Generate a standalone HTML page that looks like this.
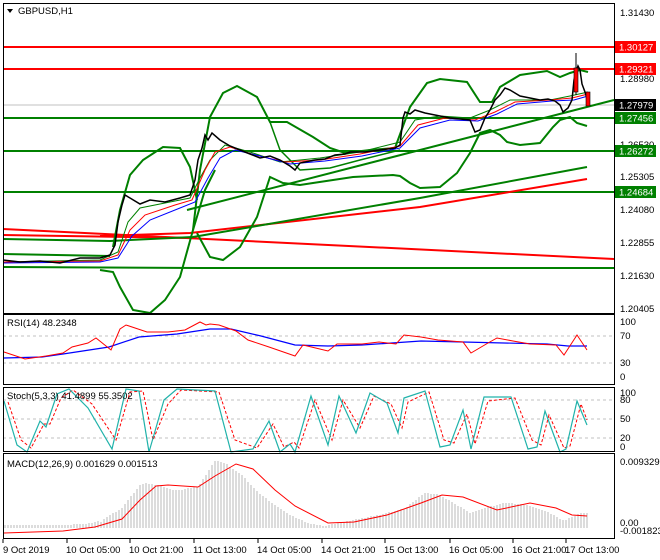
<!DOCTYPE html><html><head><meta charset="utf-8"><style>
body{margin:0;background:#fff;width:660px;height:560px;overflow:hidden}
svg{display:block}
text{font-family:"Liberation Sans",sans-serif;font-size:9.5px;fill:#000}
</style></head><body>
<svg id="s" width="660" height="560" viewBox="0 0 660 560" xmlns="http://www.w3.org/2000/svg">
<rect width="660" height="560" fill="#fff"/>
<g fill="none">
<line x1="3" y1="105" x2="614" y2="105" stroke="#c0c0c0" stroke-width="1"/>
<line x1="3" y1="47" x2="614" y2="47" stroke="#ff0000" stroke-width="2"/>
<line x1="3" y1="69" x2="614" y2="69" stroke="#ff0000" stroke-width="2"/>
<line x1="3" y1="118" x2="614" y2="118" stroke="#008000" stroke-width="2"/>
<line x1="3" y1="151" x2="614" y2="151" stroke="#008000" stroke-width="2"/>
<line x1="3" y1="192" x2="614" y2="192" stroke="#008000" stroke-width="2"/>
<polyline points="3,267 200,268 614,268" stroke="#008000" stroke-width="2"/>
<polyline points="3,229 614,259" stroke="#ff0000" stroke-width="2"/>
<polyline points="3,235 190,238" stroke="#ff0000" stroke-width="2"/>
<polyline points="100,236 190,233 420,207 587,179" stroke="#ff0000" stroke-width="2"/>
<polyline points="3,239 110,241 193,237 420,198 587,167" stroke="#008000" stroke-width="2"/>
<polyline points="187,210 420,150 614,100" stroke="#008000" stroke-width="2"/>
<polyline points="3,254 110,256" stroke="#008000" stroke-width="2"/>
<polyline points="113,247 120,210 130,175 143,160 163,147 180,148 190,167 197,200" stroke="#008000" stroke-width="2"/>
<polyline points="100,270 113,272 120,287 133,310 150,313 165,300 180,277 193,230 205,190 215,170" stroke="#008000" stroke-width="2"/>
<polyline points="193,230 200,170 210,117 223,93 237,86 257,97 270,122 287,122 313,137 330,148 345,153 370,150 395,148 410,107 427,83 440,79 467,82 480,102 492,102 500,87 520,75 547,71 560,77 570,73 580,70 588,72" stroke="#008000" stroke-width="2"/>
<polyline points="197,233 210,257 223,260 240,247 257,217 270,177 283,183 300,185 313,183 333,180 353,177 393,175 400,176 410,183 420,188 440,187 457,173 470,153 480,133 490,130 500,135 507,142 520,145 540,143 553,127 560,120 570,117 577,123 587,126" stroke="#008000" stroke-width="2"/>
<polyline points="270,122 280,150 300,170 330,168 360,160 400,150" stroke="#008000" stroke-width="1.5"/>
<polyline points="3,262 100,260 118,252 128,222 140,208 170,202 190,198 200,178 210,160 225,145 250,152 280,162 320,158 360,152 400,142 415,120 440,116 470,118 490,110 510,100 550,100 570,96 588,92" stroke="#008000" stroke-width="1"/>
<polyline points="3,262 100,261 118,255 130,230 145,215 175,205 192,200 205,170 215,152 230,147 255,155 285,162 320,160 360,154 400,146 418,125 445,118 475,120 495,112 515,102 550,100 572,98 588,94" stroke="#ff0000" stroke-width="1"/>
<polyline points="3,263 100,262 118,258 132,236 150,220 180,208 195,202 208,178 220,158 235,150 260,156 290,164 325,161 362,156 400,148 420,128 450,120 478,121 497,114 517,104 552,101 574,100 588,96" stroke="#0000ff" stroke-width="1"/>
<polyline points="3,260 20,262 40,261 60,263 80,258 100,258 110,255 115,245 118,222 122,205 125,195 130,198 140,204 150,200 165,202 180,198 190,195 195,180 198,160 202,148 205,135 208,140 212,133 220,140 230,146 240,150 250,154 260,158 270,156 280,160 290,166 295,170 300,163 305,162 315,160 325,159 335,155 345,154 350,152 365,152 380,150 395,148 400,145 403,118 405,112 410,114 415,110 425,113 430,114 440,116 450,118 460,119 470,120 475,132 480,130 485,118 490,110 495,100 500,95 505,88 510,90 520,96 530,98 540,100 548,99 555,101 560,105 563,112 568,108 572,100 574,80 576,72 578,66 580,70 582,84 585,92 588,102" stroke="#000" stroke-width="1.5"/>
<line x1="576" y1="53" x2="576" y2="95" stroke="#000"/>
<rect x="574" y="68" width="4" height="24" fill="#ff0000" stroke="#000" stroke-width="0.6"/>
<rect x="586" y="92" width="4" height="14" fill="#ff0000" stroke="#000" stroke-width="0.6"/>
</g>
<rect x="3.5" y="3.5" width="611" height="310" fill="none" stroke="#000"/>
<polygon points="7,9 13,9 10,13" fill="#000"/>
<text x="18" y="14">GBPUSD,H1</text>
<g>
<text x="620" y="16">1.31430</text>
<text x="620" y="82">1.28980</text>
<text x="620" y="148">1.26530</text>
<text x="620" y="180">1.25305</text>
<text x="620" y="213">1.24080</text>
<text x="620" y="246">1.22855</text>
<text x="620" y="279">1.21630</text>
<text x="620" y="312">1.20405</text>
<rect x="615" y="41" width="41" height="12" fill="#ff0000"/><text x="619" y="50.5" style="fill:#fff">1.30127</text>
<rect x="615" y="63" width="41" height="12" fill="#ff0000"/><text x="619" y="72.5" style="fill:#fff">1.29321</text>
<rect x="615" y="99" width="41" height="12" fill="#000"/><text x="619" y="108.5" style="fill:#fff">1.27979</text>
<rect x="615" y="112" width="41" height="12" fill="#008000"/><text x="619" y="121.5" style="fill:#fff">1.27456</text>
<rect x="615" y="145" width="41" height="12" fill="#008000"/><text x="619" y="154.5" style="fill:#fff">1.26272</text>
<rect x="615" y="186" width="41" height="12" fill="#008000"/><text x="619" y="195.5" style="fill:#fff">1.24684</text>
</g>
<g fill="none">
<line x1="3" y1="336" x2="614" y2="336" stroke="#c0c0c0" stroke-dasharray="3,3"/>
<line x1="3" y1="363" x2="614" y2="363" stroke="#c0c0c0" stroke-dasharray="3,3"/>
<polyline points="4,358 42,357 63,354 109,347 139,337 177,334 210,329 231,329 261,336 295,345 328,346 362,345 421,341 463,342 547,344 568,346 587,346" stroke="#0000ff" stroke-width="1.2"/>
<polyline points="4,352 25,359 46,356 63,353 72,347 88,343 96,338 111,350 120,329 126,325 147,332 168,332 185,330 200,322 206,325 210,324 219,325 236,331 248,340 269,347 295,356 303,345 328,351 337,344 362,344 379,342 396,344 404,335 421,337 438,340 463,342 471,353 488,343 497,338 513,341 530,344 556,345 564,355 577,335 587,350" stroke="#ff0000" stroke-width="1"/>
</g>
<rect x="3.5" y="314.5" width="611" height="70" fill="none" stroke="#000"/>
<text x="7" y="326">RSI(14) 48.2348</text>
<text x="620" y="325">100</text><text x="620" y="339">70</text><text x="620" y="366">30</text><text x="620" y="380">0</text>
<g fill="none">
<line x1="3" y1="400" x2="614" y2="400" stroke="#c0c0c0" stroke-dasharray="3,3"/>
<line x1="3" y1="419" x2="614" y2="419" stroke="#c0c0c0" stroke-dasharray="3,3"/>
<line x1="3" y1="438" x2="614" y2="438" stroke="#c0c0c0" stroke-dasharray="3,3"/>
<polyline points="8,402 21,440 31,448 44,424 50,424 61,398 73,390 92,404 116,440 130,392 143,391 153,440 168,404 181,390 219,392 235,440 257,448 273,424 284,447 294,442 299,448 315,400 332,440 343,400 360,428 374,396 391,404 402,428 408,402 429,392 444,440 454,443 467,414 475,444 488,401 515,398 532,440 541,445 549,415 564,448 570,446 581,404 587,420" stroke="#ff0000" stroke-dasharray="3,2" stroke-width="1"/>
<polyline points="4,401 17,445 27,452 40,421 46,427 57,394 69,389 88,408 112,449 126,389 139,391 149,452 164,400 177,389 215,391 231,452 253,449 269,421 280,452 290,444 295,452 311,396 328,445 339,396 356,433 370,393 387,403 398,433 404,398 425,391 440,447 450,445 463,410 471,449 484,397 511,397 528,449 537,447 545,411 560,452 566,449 577,401 587,425" stroke="#20b2aa" stroke-width="1.2"/>
</g>
<rect x="3.5" y="387.5" width="611" height="64" fill="none" stroke="#000"/>
<text x="7" y="399">Stoch(5,3,3) 41.4899 55.3502</text>
<text x="620" y="396">100</text><text x="620" y="403">80</text><text x="620" y="422">50</text><text x="620" y="441">20</text><text x="620" y="450">0</text>
<g stroke="#b8b8b8" stroke-width="1">
<path d="M5 528V525M8 528V525M11 528V525M14 528V525M17 528V525M20 528V525M23 528V525M26 528V525M29 528V525M32 528V525M35 528V525M38 528V525M41 528V525M44 528V525M47 528V525M50 528V525M53 528V525M56 528V525M59 528V525M62 528V525M65 528V525M68 528V525M71 528V525M74 528V524M77 528V524M80 528V524M83 528V524M86 528V524M89 528V523M92 528V523M95 528V522M98 528V521M101 528V522M104 528V519M107 528V517M110 528V515M113 528V513M116 528V512M119 528V510M122 528V508M125 528V504M128 528V500M131 528V496M134 528V493M137 528V489M140 528V485M143 528V484M146 528V483M149 528V484M152 528V484M155 528V485M158 528V485M161 528V486M164 528V487M167 528V488M170 528V489M173 528V490M176 528V490M179 528V490M182 528V490M185 528V489M188 528V488M191 528V488M194 528V487M197 528V487M200 528V484M203 528V479M206 528V475M209 528V470M212 528V465M215 528V461M218 528V461M221 528V462M224 528V463M227 528V464M230 528V467M233 528V469M236 528V471M239 528V473M242 528V475M245 528V478M248 528V482M251 528V485M254 528V488M257 528V491M260 528V494M263 528V496M266 528V498M269 528V501M272 528V503M275 528V505M278 528V507M281 528V509M284 528V511M287 528V513M290 528V515M293 528V516M296 528V518M299 528V519M302 528V520M305 528V522M308 528V523M311 528V524M314 528V524M317 528V525M320 528V525M323 528V526M326 528V526M329 528V525M332 528V524M335 528V524M338 528V523M341 528V522M344 528V522M347 528V521M350 528V521M353 528V520M356 528V519M359 528V519M362 528V518M365 528V518M368 528V517M371 528V516M374 528V516M377 528V515M380 528V515M383 528V514M386 528V513M389 528V512M392 528V512M395 528V511M398 528V510M401 528V509M404 528V509M407 528V507M410 528V504M413 528V502M416 528V500M419 528V497M422 528V495M425 528V493M428 528V493M431 528V494M434 528V494M437 528V494M440 528V495M443 528V497M446 528V499M449 528V500M452 528V502M455 528V504M458 528V506M461 528V507M464 528V509M467 528V511M470 528V513M473 528V512M476 528V511M479 528V510M482 528V509M485 528V508M488 528V507M491 528V506M494 528V506M497 528V505M500 528V504M503 528V503M506 528V503M509 528V503M512 528V503M515 528V504M518 528V504M521 528V504M524 528V505M527 528V505M530 528V506M533 528V507M536 528V508M539 528V509M542 528V510M545 528V511M548 528V512M551 528V514M554 528V515M557 528V517M560 528V519M563 528V520M566 528V520M569 528V518M572 528V517M575 528V516M578 528V514M581 528V513M584 528V513M587 528V513"/>
</g>
<polyline points="4,533 63,531 95,527 122,519 140,500 156,486 168,485 198,487 215,476 236,464 253,469 275,490 295,506 328,523 354,522 387,515 421,503 442,495 463,497 497,510 530,503 556,508 572,515 587,516" fill="none" stroke="#ff0000" stroke-width="1"/>
<rect x="3.5" y="453.5" width="611" height="85" fill="none" stroke="#000"/>
<text x="7" y="467">MACD(12,26,9) 0.001629 0.001513</text>
<text x="620" y="465">0.009329</text><text x="620" y="526">0.00</text><text x="620" y="534">-0.001823</text>
<g stroke="#000">
<line x1="3" y1="539" x2="3" y2="543"/><line x1="67" y1="539" x2="67" y2="543"/><line x1="130" y1="539" x2="130" y2="543"/><line x1="194" y1="539" x2="194" y2="543"/><line x1="258" y1="539" x2="258" y2="543"/><line x1="322" y1="539" x2="322" y2="543"/><line x1="385" y1="539" x2="385" y2="543"/><line x1="450" y1="539" x2="450" y2="543"/><line x1="513" y1="539" x2="513" y2="543"/><line x1="566" y1="539" x2="566" y2="543"/>
</g>
<text x="3" y="553">9 Oct 2019</text><text x="66" y="553">10 Oct 05:00</text><text x="129" y="553">10 Oct 21:00</text><text x="193" y="553">11 Oct 13:00</text><text x="257" y="553">14 Oct 05:00</text><text x="321" y="553">14 Oct 21:00</text><text x="384" y="553">15 Oct 13:00</text><text x="449" y="553">16 Oct 05:00</text><text x="512" y="553">16 Oct 21:00</text><text x="565" y="553">17 Oct 13:00</text>
</svg>
</body></html>
